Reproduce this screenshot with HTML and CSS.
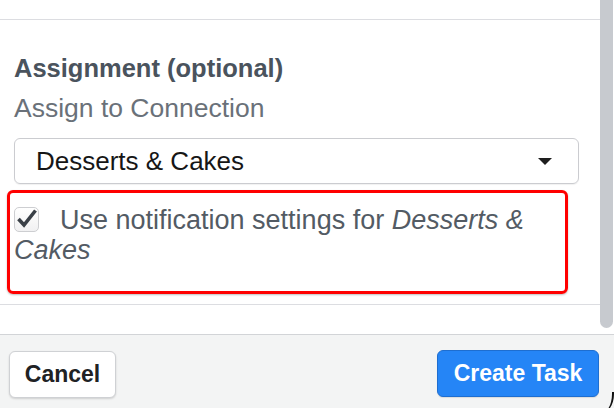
FILE: index.html
```html
<!DOCTYPE html>
<html>
<head>
<meta charset="utf-8">
<link rel="stylesheet" href="styles.css">
</head>
<body>
<div class="app">
  <div class="scroll-area">
    <div class="content">
      <div class="prev-section"></div>
      <div class="section">
        <h2 class="heading">Assignment (optional)</h2>
        <div class="label">Assign to Connection</div>
        <div class="select">
          <span class="select-value">Desserts &amp; Cakes</span>
          <span class="caret"></span>
        </div>
        <div class="highlight">
          <label class="check-row"><span class="checkbox"><svg width="25" height="25" viewBox="0 0 25 25"><path d="M4.5 13 L10 19 L21.5 4.5" fill="none" stroke="#3a4047" stroke-width="3.6" stroke-linejoin="miter"/></svg></span>Use notification settings for <em>Desserts &amp;</em> <em>Cakes</em></label>
        </div>
      </div>
    </div>
    <div class="scrollbar"><div class="thumb"></div></div>
  </div>
  <div class="footer">
    <button class="btn btn-cancel">Cancel</button>
    <button class="btn btn-primary">Create Task</button>
  </div>
  <div class="corner"></div>
</div>
</body>
</html>
```
FILE: styles.css
```css
* { box-sizing: border-box; }
html, body { margin: 0; padding: 0; }
body {
  width: 614px;
  height: 408px;
  overflow: hidden;
  background: #ffffff;
  font-family: "Liberation Sans", Arial, sans-serif;
}
.app {
  position: relative;
  display: flex;
  flex-direction: column;
  width: 614px;
  height: 408px;
}
.scroll-area {
  height: 334px;
  display: flex;
  flex-direction: row;
  overflow: hidden;
}
.content {
  flex: 1;
  display: flex;
  flex-direction: column;
}
.prev-section {
  height: 20px;
  border-bottom: 1px solid #dcdde1;
}
.section {
  padding: 33px 21px 10px 14px;
  border-bottom: 1px solid #dcdde1;
  display: flex;
  flex-direction: column;
}
.heading {
  margin: 0;
  font-size: 25.5px;
  font-weight: bold;
  line-height: 30px;
  color: #4a535d;
}
.label {
  margin-top: 10px;
  font-size: 26.5px;
  line-height: 30px;
  color: #6a7179;
}
.select {
  margin-top: 15px;
  height: 46px;
  border: 1px solid #cbccd0;
  border-radius: 6px;
  display: flex;
  align-items: center;
  justify-content: space-between;
  padding: 0 26px 0 21px;
  box-shadow: 0 1px 1px rgba(0,0,0,0.06);
}
.select-value {
  font-size: 26px;
  color: #161616;
}
.caret {
  width: 0;
  height: 0;
  border-left: 7px solid transparent;
  border-right: 7px solid transparent;
  border-top: 7px solid #1e1e1e;
}
.highlight {
  margin-top: 6px;
  margin-left: -7px;
  width: 561px;
  height: 104px;
  border: 3px solid #ff0000;
  border-radius: 6px;
  padding: 12px 4px 0 4px;
  box-shadow: 0 1px 2px rgba(0,0,0,0.25);
}
.check-row {
  display: block;
  font-size: 27px;
  line-height: 30px;
  color: #535b64;
}
.check-row em {
  font-style: italic;
}
.checkbox {
  display: inline-block;
  vertical-align: -3px;
  width: 25px;
  height: 25px;
  margin-right: 21px;
  border: 1px solid #cdced1;
  border-radius: 5px;
  background: linear-gradient(#ffffff, #f1f1f2);
  position: relative;
}
.checkbox svg {
  position: absolute;
  left: -1px;
  top: -2px;
}
.scrollbar {
  width: 14px;
  padding-right: 1px;
}
.thumb {
  height: 328px;
  background: #c7cacf;
  border-radius: 0 0 7px 7px;
}
.footer {
  flex: 1;
  border-top: 1px solid #d2d4d7;
  background: #f3f4f4;
  display: flex;
  justify-content: space-between;
  align-items: flex-start;
  padding: 16px 15px 0 9px;
}
.btn {
  height: 47px;
  border-radius: 6px;
  font-family: "Liberation Sans", Arial, sans-serif;
  font-size: 23px;
  font-weight: bold;
  cursor: pointer;
}
.btn-cancel {
  width: 107px;
  background: #ffffff;
  color: #202224;
  border: 1px solid #cfd1d4;
  box-shadow: 0 1px 2px rgba(0,0,0,0.15);
}
.btn-primary {
  width: 162px;
  margin-top: -1px;
  background: #2585f6;
  color: #ffffff;
  border: 1px solid #1e6ed0;
  box-shadow: 0 1px 1px rgba(0,0,0,0.1);
}
.corner {
  position: absolute;
  right: 0;
  bottom: -6px;
  width: 14px;
  height: 22px;
  border-right: 2px solid #111;
  border-bottom-right-radius: 14px 20px;
}
```
